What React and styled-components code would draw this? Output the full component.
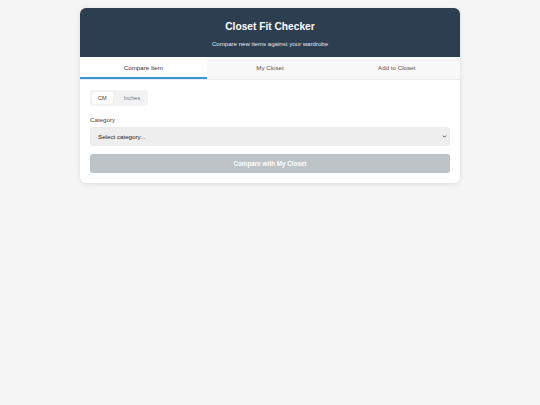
import React, { useState } from 'react'
import styled, { createGlobalStyle } from 'styled-components'
import { ChevronDown } from 'lucide-react'

const GlobalStyle = createGlobalStyle`
    * {
        box-sizing: border-box;
    }
    body {
        margin: 0;
        background-color: #f5f5f5;
        font-family: "Liberation Sans", Arial, sans-serif;
        color: #333;
    }
`

const Card = styled.div`
    width: 380px;
    margin: 8px auto;
    background-color: white;
    border-radius: 6px;
    box-shadow: 0 1px 5px rgba(0, 0, 0, 0.1);
    overflow: hidden;
`

const Header = styled.div`
    background-color: #2c3e50;
    color: white;
    text-align: center;
    padding: 13px 10px 10px;
`

const Title = styled.h1`
    margin: 0 0 7px;
    font-size: 10.2px;
    line-height: 12px;
    font-weight: bold;
`

const Subtitle = styled.p`
    margin: 0;
    font-size: 6.1px;
    line-height: 7px;
    color: #e3e8ec;
`

const Tabs = styled.div`
    display: flex;
    background-color: #f8f8f8;
    border-bottom: 1px solid #ebebeb;
`

const Tab = styled.button`
    flex: 1;
    height: 22px;
    border: none;
    border-bottom: 2px solid ${props => props.active ? '#3498db' : 'transparent'};
    background-color: ${props => props.active ? 'white' : 'transparent'};
    color: ${props => props.active ? '#333' : '#555'};
    font-family: inherit;
    font-size: 6.2px;
    padding: 0;
    cursor: pointer;
`

const Body = styled.div`
    padding: 10px;
`

const Toggle = styled.div`
    display: flex;
    width: fit-content;
    gap: 5px;
    padding: 2px;
    background-color: #f3f3f3;
    border-radius: 3px;
    margin-bottom: 10px;
`

const ToggleButton = styled.button`
    height: 12px;
    padding: 0 6px;
    border: none;
    border-radius: 2px;
    background-color: ${props => props.active ? 'white' : 'transparent'};
    box-shadow: ${props => props.active ? '0 0 1px rgba(0,0,0,0.12)' : 'none'};
    color: ${props => props.active ? '#444' : '#777'};
    font-family: inherit;
    font-size: 5.6px;
    cursor: pointer;
`

const Label = styled.label`
    display: block;
    font-size: 6.2px;
    line-height: 7px;
    color: #444;
    margin-bottom: 4px;
`

const SelectWrap = styled.div`
    position: relative;
    margin-bottom: 8px;
`

const Select = styled.select`
    display: block;
    width: 100%;
    height: 19px;
    padding: 0 14px 0 7px;
    border: 1px solid #ececec;
    border-radius: 3px;
    background-color: #eeeeee;
    color: #222;
    font-family: inherit;
    font-size: 6.2px;
    appearance: none;
    -webkit-appearance: none;
    outline: none;
`

const Arrow = styled(ChevronDown)`
    position: absolute;
    right: 3px;
    top: 7px;
    pointer-events: none;
    color: #333;
`

const CompareButton = styled.button`
    display: block;
    width: 100%;
    height: 19px;
    border: none;
    border-radius: 3px;
    background-color: #bdc3c7;
    color: white;
    font-family: inherit;
    font-size: 6.3px;
    font-weight: bold;
    cursor: not-allowed;
`

const tabs = ['Compare Item', 'My Closet', 'Add to Closet']

const App = () => {
    const [tab, setTab] = useState(0)
    const [unit, setUnit] = useState('cm')
    const [category, setCategory] = useState('')

    return (
        <>
            <GlobalStyle />
            <Card>
                <Header>
                    <Title>Closet Fit Checker</Title>
                    <Subtitle>Compare new items against your wardrobe</Subtitle>
                </Header>
                <Tabs>
                    {tabs.map((name, i) => (
                        <Tab key={name} active={tab === i} onClick={() => setTab(i)}>
                            {name}
                        </Tab>
                    ))}
                </Tabs>
                <Body>
                    <Toggle>
                        <ToggleButton active={unit === 'cm'} onClick={() => setUnit('cm')}>CM</ToggleButton>
                        <ToggleButton active={unit === 'in'} onClick={() => setUnit('in')}>Inches</ToggleButton>
                    </Toggle>
                    <Label htmlFor="category">Category</Label>
                    <SelectWrap>
                        <Select id="category" value={category} onChange={e => setCategory(e.target.value)}>
                            <option value="">Select category...</option>
                            <option value="tops">Tops</option>
                            <option value="pants">Pants</option>
                            <option value="dresses">Dresses</option>
                            <option value="shoes">Shoes</option>
                        </Select>
                        <Arrow size={5} strokeWidth={4} />
                    </SelectWrap>
                    <CompareButton disabled={!category}>Compare with My Closet</CompareButton>
                </Body>
            </Card>
        </>
    )
}

export default App
